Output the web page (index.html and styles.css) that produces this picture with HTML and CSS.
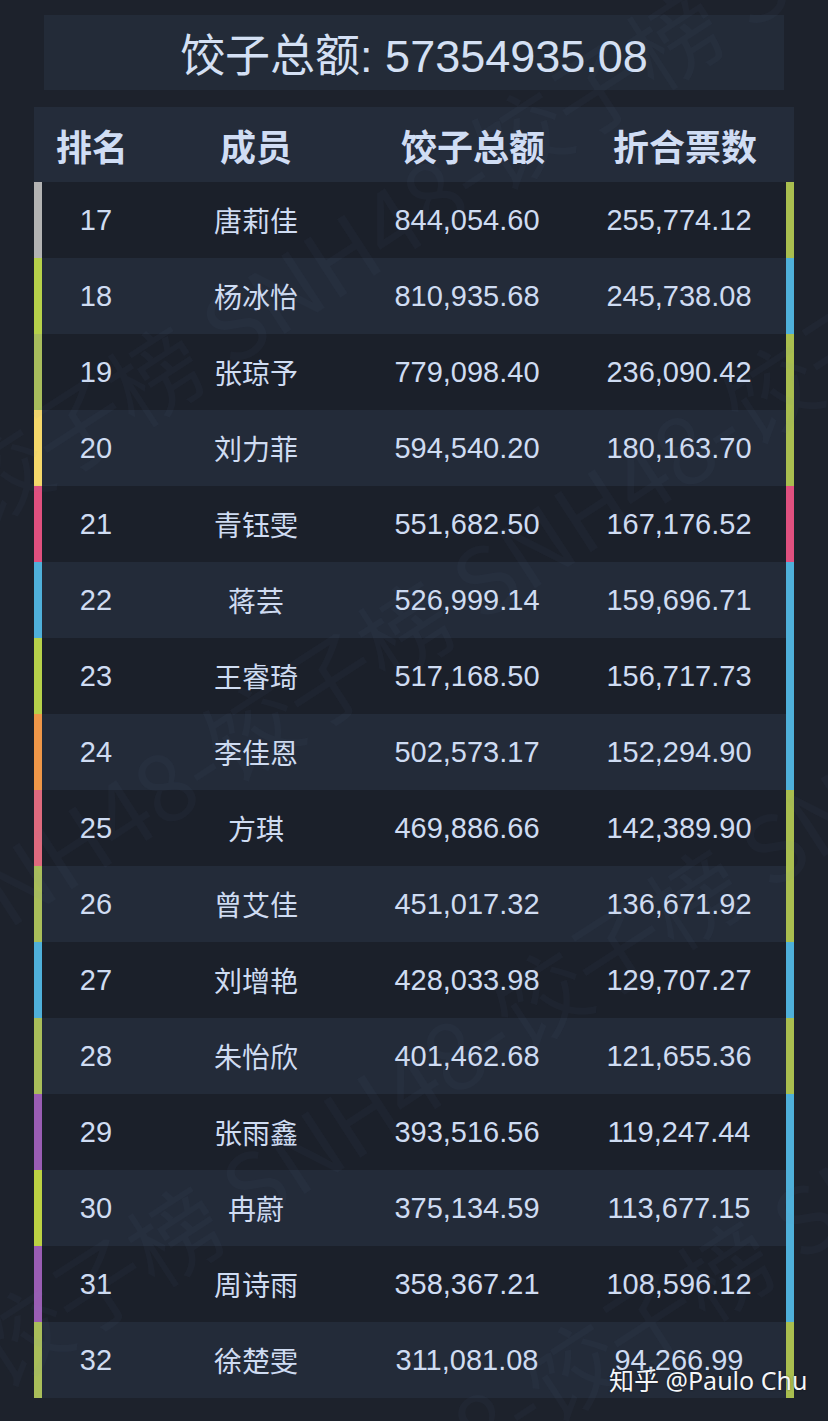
FILE: index.html
```html
<!DOCTYPE html>
<html lang="zh">
<head>
<meta charset="utf-8">
<link rel="stylesheet" href="styles.css">
</head>
<body>
<div class="page">
  <div class="title">饺子总额: 57354935.08</div>
  <div class="table">
    <div class="head">
      <div>排名</div><div>成员</div><div>饺子总额</div><div>折合票数</div>
    </div>
    <div class="row dark"><i class="bar" style="background:#b3b3b3"></i><div>17</div><div class="cn">唐莉佳</div><div>844,054.60</div><div>255,774.12</div><i class="bar" style="background:#a9be4f"></i></div>
    <div class="row light"><i class="bar" style="background:#b6d14a"></i><div>18</div><div class="cn">杨冰怡</div><div>810,935.68</div><div>245,738.08</div><i class="bar" style="background:#4fb0da"></i></div>
    <div class="row dark"><i class="bar" style="background:#a8bd5c"></i><div>19</div><div class="cn">张琼予</div><div>779,098.40</div><div>236,090.42</div><i class="bar" style="background:#a9be4f"></i></div>
    <div class="row light"><i class="bar" style="background:#f5d86a"></i><div>20</div><div class="cn">刘力菲</div><div>594,540.20</div><div>180,163.70</div><i class="bar" style="background:#a9be4f"></i></div>
    <div class="row dark"><i class="bar" style="background:#e0507f"></i><div>21</div><div class="cn">青钰雯</div><div>551,682.50</div><div>167,176.52</div><i class="bar" style="background:#e0507f"></i></div>
    <div class="row light"><i class="bar" style="background:#4fb0da"></i><div>22</div><div class="cn">蒋芸</div><div>526,999.14</div><div>159,696.71</div><i class="bar" style="background:#4fb0da"></i></div>
    <div class="row dark"><i class="bar" style="background:#b6d14a"></i><div>23</div><div class="cn">王睿琦</div><div>517,168.50</div><div>156,717.73</div><i class="bar" style="background:#4fb0da"></i></div>
    <div class="row light"><i class="bar" style="background:#ef9748"></i><div>24</div><div class="cn">李佳恩</div><div>502,573.17</div><div>152,294.90</div><i class="bar" style="background:#4fb0da"></i></div>
    <div class="row dark"><i class="bar" style="background:#df6a7e"></i><div>25</div><div class="cn">方琪</div><div>469,886.66</div><div>142,389.90</div><i class="bar" style="background:#a9be4f"></i></div>
    <div class="row light"><i class="bar" style="background:#a9be5a"></i><div>26</div><div class="cn">曾艾佳</div><div>451,017.32</div><div>136,671.92</div><i class="bar" style="background:#a9be4f"></i></div>
    <div class="row dark"><i class="bar" style="background:#4fb0da"></i><div>27</div><div class="cn">刘增艳</div><div>428,033.98</div><div>129,707.27</div><i class="bar" style="background:#4fb0da"></i></div>
    <div class="row light"><i class="bar" style="background:#a9be5a"></i><div>28</div><div class="cn">朱怡欣</div><div>401,462.68</div><div>121,655.36</div><i class="bar" style="background:#a9be4f"></i></div>
    <div class="row dark"><i class="bar" style="background:#9a5db4"></i><div>29</div><div class="cn">张雨鑫</div><div>393,516.56</div><div>119,247.44</div><i class="bar" style="background:#4fb0da"></i></div>
    <div class="row light"><i class="bar" style="background:#bcd243"></i><div>30</div><div class="cn">冉蔚</div><div>375,134.59</div><div>113,677.15</div><i class="bar" style="background:#4fb0da"></i></div>
    <div class="row dark"><i class="bar" style="background:#9a5db4"></i><div>31</div><div class="cn">周诗雨</div><div>358,367.21</div><div>108,596.12</div><i class="bar" style="background:#4fb0da"></i></div>
    <div class="row light"><i class="bar" style="background:#a9be5a"></i><div>32</div><div class="cn">徐楚雯</div><div>311,081.08</div><div>94,266.99</div><i class="bar" style="background:#a9be4f"></i></div>
  </div>
</div>
<div class="watermark" aria-hidden="true">
  <span class="wm wm1">饺子榜 SNH48-饺子榜 SNH48-</span>
  <span class="wm wm2">SNH48-饺子榜 SNH48-饺子榜</span>
  <span class="wm wm3">饺子榜 SNH48-饺子榜 SNH48-</span>
  <span class="wm wm4">SNH48-饺子榜 SNH48-饺子榜</span>
</div>
<div class="credit">知乎 @Paulo Chu</div>
</body>
</html>
```

FILE: styles.css
```css
html, body {
  margin: 0;
  padding: 0;
}
body {
  background: #1d222c;
  width: 828px;
  height: 1421px;
  position: relative;
  overflow: hidden;
  color: #cfdcf2;
  font-family: "Liberation Sans", "Noto Sans CJK SC", sans-serif;
}
.page {
  padding-top: 15px;
  display: flex;
  flex-direction: column;
  align-items: center;
}
.title {
  width: 740px;
  height: 75px;
  background: #232b38;
  display: flex;
  align-items: center;
  justify-content: center;
  font-size: 45px;
  color: #d4e0f4;
  margin-bottom: 17px;
}
.table {
  width: 760px;
  display: flex;
  flex-direction: column;
}
.head {
  height: 75px;
  background: #242c3a;
  display: grid;
  grid-template-columns: 100px 228px 206px 218px;
  padding-left: 8px;
  align-items: center;
  text-align: center;
  font-family: "Noto Sans CJK SC", sans-serif;
  font-weight: 700;
  font-size: 36px;
  color: #d0ddf4;
}
.row {
  height: 76px;
  display: grid;
  grid-template-columns: 8px 108px 212px 210px 214px 8px;
  align-items: center;
  text-align: center;
  font-size: 29px;
}
.row .bar {
  display: block;
  height: 100%;
}
.row.dark {
  background: #1b202a;
}
.row.light {
  background: linear-gradient(#1d222c, #1d222c) left/8px 100% no-repeat,
              linear-gradient(#1d222c, #1d222c) right/8px 100% no-repeat,
              #232b39;
}
.row .cn {
  font-family: "Noto Sans CJK SC", sans-serif;
  font-size: 28px;
}
.watermark {
  position: absolute;
  inset: 0;
  pointer-events: none;
  overflow: hidden;
}
.wm {
  position: absolute;
  white-space: nowrap;
  font-family: "Noto Sans CJK SC", sans-serif;
  font-size: 92px;
  font-weight: 400;
  color: rgba(120, 140, 175, 0.045);
  transform-origin: left center;
  transform: rotate(-33deg);
}
.wm1 { left: -40px; top: 430px; }
.wm2 { left: -60px; top: 860px; }
.wm3 { left: -20px; top: 1290px; }
.wm4 { left: 260px; top: 1500px; }
.credit {
  position: absolute;
  left: 609px;
  top: 1363px;
  font-family: "Noto Sans", "Noto Sans CJK SC", sans-serif;
  font-size: 25px;
  line-height: 34px;
  color: #f4f6f9;
  text-shadow: 0 0 2px rgba(0, 0, 0, 0.6);
}
```
